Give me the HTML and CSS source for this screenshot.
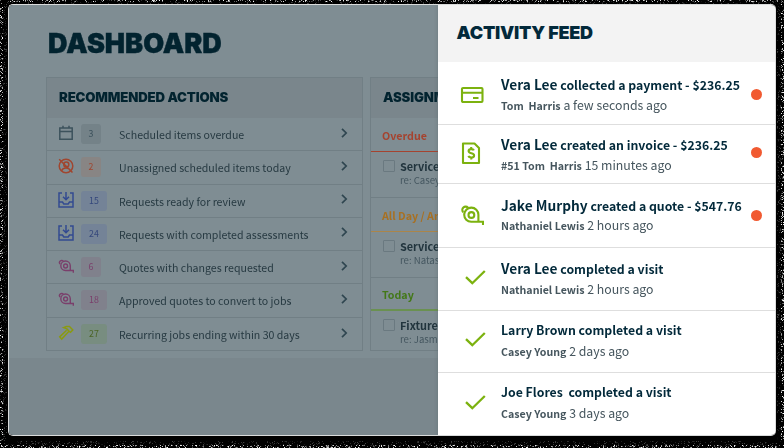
FILE: index.html
```html
<!DOCTYPE html>
<html lang="en">
<head>
<meta charset="utf-8">
<title>Dashboard</title>
<link rel="stylesheet" href="styles.css">
</head>
<body>
<canvas class="grain" width="784" height="448"></canvas>
<svg class="defs" aria-hidden="true">
  <symbol id="calendar" viewBox="0 0 16 16"><path d="M1.800 3h12.400v11.300H1.800zM1.800 6.500h12.400M5 .7v2.500M11 .7v2.500"/></symbol>
  <symbol id="unassigned" viewBox="0 0 16 16"><circle cx="8" cy="8" r="6.800"/><circle cx="8.300" cy="6.500" r="2.500"/><path d="M3.500 12.800c1-2 2.700-2.700 4.500-2.700s3.500.7 4.500 2.700M1.200 1.200l13.300 13.300"/></symbol>
  <symbol id="inbox" viewBox="0 0 16 16"><path d="M4 1H1v14h14V1h-3M1 10h3.500l1.300 2h4.400l1.300-2H15M8 0v7.300M5 4.700l3 3 3-3"/></symbol>
  <symbol id="tape" viewBox="0 0 24 24"><path d="M11.200 18.800a7.100 7.100 0 1 1 7.200-7.100v7.100M11 18.800h12v3.200"/><circle cx="11.400" cy="12" r="2.900"/><path d="M3.200 9.200A2.800 2.800 0 1 1 8 4.700"/></symbol>
  <symbol id="hammer" viewBox="0 0 16 16"><path d="M5.600 2.600 8.300 1.500h3.200l3.300 3.500-2.300 2.300-1.600-1.200-2-2.200zM8.600 5.300 1.700 11.900l2 2.200 6.800-7.300"/></symbol>
  <symbol id="card" viewBox="0 0 24 24"><rect x="2" y="5" width="20.500" height="14" rx="1"/><path d="M2 9.800h20.500M13 15h5.500"/></symbol>
  <symbol id="invoice" viewBox="0 0 24 24"><path d="M3 2.500h11.500L19 7v15H3z" stroke-linejoin="round"/><path d="M13.900 9.400c-.4-1-1.500-1.300-2.700-1.300-1.600 0-2.600.8-2.600 2 0 3 5.500 1.400 5.500 4.300 0 1.400-1.200 2.100-2.900 2.100-1.500 0-2.500-.5-2.800-1.600M11.200 6v2M11.200 16.500v2"/></symbol>
  <symbol id="check" viewBox="0 0 24 24"><path d="M3 12.200 9.300 18.200 21.800 6"/></symbol>
  <symbol id="chevron" viewBox="0 0 8 10"><path d="M2 .8l4.200 4.200L2 9.200"/></symbol>
</svg>
<div class="window">
  <main class="dashboard">
    <h1><span>DASHBOARD</span></h1>
    <div class="columns">
      <section class="card actions">
        <h2><span>RECOMMENDED ACTIONS</span></h2>
        <ul>
          <li class="slate"><svg class="icon"><use href="#calendar"/></svg><b class="n">3</b><span>Scheduled items overdue</span><svg class="chev"><use href="#chevron"/></svg></li>
          <li class="red"><svg class="icon"><use href="#unassigned"/></svg><b class="n">2</b><span>Unassigned scheduled items today</span><svg class="chev"><use href="#chevron"/></svg></li>
          <li class="blue"><svg class="icon"><use href="#inbox"/></svg><b class="n wide">15</b><span>Requests ready for review</span><svg class="chev"><use href="#chevron"/></svg></li>
          <li class="blue"><svg class="icon"><use href="#inbox"/></svg><b class="n wide">24</b><span>Requests with completed assessments</span><svg class="chev"><use href="#chevron"/></svg></li>
          <li class="pink"><svg class="icon"><use href="#tape"/></svg><b class="n">6</b><span>Quotes with changes requested</span><svg class="chev"><use href="#chevron"/></svg></li>
          <li class="pink"><svg class="icon"><use href="#tape"/></svg><b class="n wide">18</b><span>Approved quotes to convert to jobs</span><svg class="chev"><use href="#chevron"/></svg></li>
          <li class="lime"><svg class="icon"><use href="#hammer"/></svg><b class="n wide">27</b><span>Recurring jobs ending within 30 days</span><svg class="chev"><use href="#chevron"/></svg></li>
        </ul>
      </section>
      <section class="card assigned">
        <h2><span>ASSIGNMENTS</span></h2>
        <h3 class="overdue">Overdue</h3>
        <div class="task t1"><i></i><div><strong>Service</strong><p>re: Casey</p></div></div>
        <h3 class="anytime">All Day / Anytime</h3>
        <div class="task t2"><i></i><div><strong>Service</strong><p>re: Natasha</p></div></div>
        <h3 class="today">Today</h3>
        <div class="task t3"><i></i><div><strong>Fixture</strong><p>re: Jasmine</p></div></div>
      </section>
    </div>
  </main>
  <aside class="feed">
    <h2><span>ACTIVITY FEED</span></h2>
    <article class="e1"><svg><use href="#card"/></svg><div><h4><em>Vera Lee</em> collected a payment - $236.25</h4><p><b>Tom&nbsp; Harris</b> a few seconds ago</p></div><i class="dot"></i></article>
    <article class="e2"><svg><use href="#invoice"/></svg><div><h4><em>Vera Lee</em> created an invoice - $236.25</h4><p><b>#51 Tom&nbsp; Harris</b> 15 minutes ago</p></div><i class="dot"></i></article>
    <article class="e3"><svg><use href="#tape"/></svg><div><h4><em>Jake Murphy</em> created a quote - $547.76</h4><p><b>Nathaniel Lewis</b> 2 hours ago</p></div><i class="dot"></i></article>
    <article class="e4 done"><svg><use href="#check"/></svg><div><h4><em>Vera Lee</em> completed a visit</h4><p><b>Nathaniel Lewis</b> 2 hours ago</p></div></article>
    <article class="e5 done"><svg><use href="#check"/></svg><div><h4>Larry Brown completed a visit</h4><p><b>Casey Young</b> 2 days ago</p></div></article>
    <article class="e6 done"><svg><use href="#check"/></svg><div><h4>Joe Flores&nbsp; completed a visit</h4><p><b>Casey Young</b> 3 days ago</p></div></article>
  </aside>
</div>
<script src="grain.js"></script>
</body>
</html>
```
FILE: styles.css
```css
* { box-sizing: border-box; margin: 0; padding: 0; }
body {
  width: 784px; height: 448px; overflow: hidden; background: #000;
  padding: 4px 8px;
  font-family: "Noto Sans CJK SC", "Noto Sans", sans-serif;
  white-space: nowrap;
}
ul { list-style: none; }
i, em { font-style: normal; }
.grain { position: absolute; left: 0; top: 0; z-index: -1; }
.defs { position: absolute; width: 0; height: 0; }
svg { fill: none; stroke: currentColor; flex: none; }

.window {
  width: 768px; height: 432px; display: flex; overflow: hidden;
  border: 1px solid #d9dbdb; border-right: 0; border-radius: 5px;
}
.dashboard {
  width: 429px; overflow: hidden; padding-left: 37px;
  background: linear-gradient(#7f8d93 353px, #7a878d 353px);
}
h1, h2 { font-family: Inter, "Open Sans", sans-serif; color: #02232f; font-weight: 900; }
h1 { height: 72px; padding: 21px 0 0 2px; font-size: 27px; line-height: 36px; -webkit-text-stroke: 0.4px; }
.columns { display: flex; gap: 7px; width: 700px; }
.card { border: 1px solid #717f85; height: 274px; }
.card h2 { height: 40px; background: #7a868c; font-size: 13.2px; line-height: 38px; padding-left: 12px; letter-spacing: -0.15px; }
.actions { width: 317px; }
.actions li {
  display: flex; align-items: center; height: 33.25px;
  border-bottom: 1px solid #717f85; padding-left: 11px;
  font-size: 10.600px; color: #263941; line-height: 18px;
}
.actions li:last-child { border: 0; }
.icon { width: 16px; height: 16px; stroke-width: 1.5; margin-top: -2px; }
.n {
  width: 20px; height: 20px; margin: 0 0 0 7px; border-radius: 3px; background: var(--chip);
  font-size: 8.800px; font-weight: 400; line-height: 20px; text-align: center;
}
.n.wide { width: 26px; }
.actions li span { margin: 2px 0 0 18px; flex: 1; }
.actions .n.wide + span { margin-left: 12px; }
.chev { width: 8px; height: 10px; stroke-width: 1.700; margin: -3px 14px 0 0; color: #2f4650; }
.slate { --chip: #748288; } .slate .icon, .slate .n { color: #3c525c; }
.red { --chip: #888584; } .red .icon, .red .n { color: #a0462f; }
.blue { --chip: #748397; } .blue .icon { color: #334b91; } .blue .n { color: #35487c; }
.pink { --chip: #80818c; } .pink .icon, .pink .n { color: #7a3f6b; }
.pink .icon { stroke-width: 2.1; }
.lime { --chip: #788d80; } .lime .icon { color: #8a9a11; } .lime .n { color: #4b6425; }

.assigned { width: 330px; }
.assigned h3 { font-size: 10.700px; line-height: 18px; padding-left: 11px; border-bottom: 1px solid; }
.assigned .overdue { height: 34px; padding-top: 9px; color: #a5432f; }
.assigned .anytime { height: 34px; padding-top: 9px; color: #a87022; border-color: #ab8549; }
.assigned .today { height: 33px; padding-top: 8px; color: #437818; border-color: #6a9151; border-width: 2px; }
.task { display: flex; padding: 7px 0 0 12px; gap: 5px; height: 46px; border-bottom: 1px solid #717f85; }
.task i { width: 12px; height: 12px; border: 1.500px solid #6a7980; border-radius: 1px; margin-top: 1px; }
.task strong { display: block; font-size: 10.900px; line-height: 15px; color: #21343d; }
.task p { font-size: 9.600px; line-height: 12px; color: #44565f; }
.task.t3 { border: 0; }

.feed { flex: 1; background: #fff; box-shadow: -1px 0 3px #56666d55; border-right: 1px solid #ddd; }
.feed h2 { height: 57px; background: #f3f3f3; font-size: 18px; line-height: 56px; padding-left: 18.500px; color: #02293a; letter-spacing: -0.250px; }
article { display: flex; border-bottom: 1px solid #dedede; padding-left: 22px; }
article svg { width: 24px; height: 24px; color: #7cb20f; stroke-width: 2.100; }
.done svg { position: relative; left: 3px; stroke-width: 2.300; }
article > div { margin-left: 17px; width: 250px; }
article h4 { font-size: 12.300px; line-height: 18px; height: 20px; color: #02293a; }
article em { font-size: 13.700px; }
article p { font-size: 12.300px; line-height: 20px; color: #45555d; }
article p b { font-size: 10.650px; }
.dot { width: 11px; height: 11px; border-radius: 50%; background: #f15a31; }
.e1 { height: 63px; padding-top: 13px; } .e1 svg { margin-top: 8px; } .e1 .dot { margin-top: 14px; }
.e2 { height: 59px; padding-top: 10px; } .e2 svg { margin-top: 6px; } .e2 .dot { margin-top: 12px; }
.e3 { height: 64px; padding-top: 12px; } .e3 svg { margin-top: 7px; } .e3 .dot { margin-top: 14px; }
.e3 p { margin-top: -1px; }
.e4 { height: 63px; padding-top: 11px; } .e4 svg { margin-top: 6px; }
.e5 { height: 62px; padding-top: 9px; } .e5 svg { margin-top: 7px; }
.e5 h4, .e6 h4 { line-height: 20px; }
.e5 p, .e6 p { margin-top: 1px; }
.e6 { height: 63px; padding-top: 9px; border: 0; } .e6 svg { margin-top: 8px; }
```
FILE: grain.js
```js
// Scatter fine grain around the window's outer edge.
const ctx = document.querySelector('.grain').getContext('2d');
let seed = 41;
const rnd = () => (seed = (seed * 16807) % 2147483647) / 2147483647;
for (let y = 0; y < 448; y++) for (let x = 0; x < 784; x++) {
  const e = Math.min(x, 783 - x, y + 1, 447 - y);
  if (e > 6) continue;
  if (rnd() < (e < 3 ? 0.3 : 0.2)) {
    const v = Math.floor(rnd() * (e < 3 ? 255 : 70));
    ctx.fillStyle = `rgb(${v},${v},${v})`;
    ctx.fillRect(x, y, 1, 1);
  }
}
```
